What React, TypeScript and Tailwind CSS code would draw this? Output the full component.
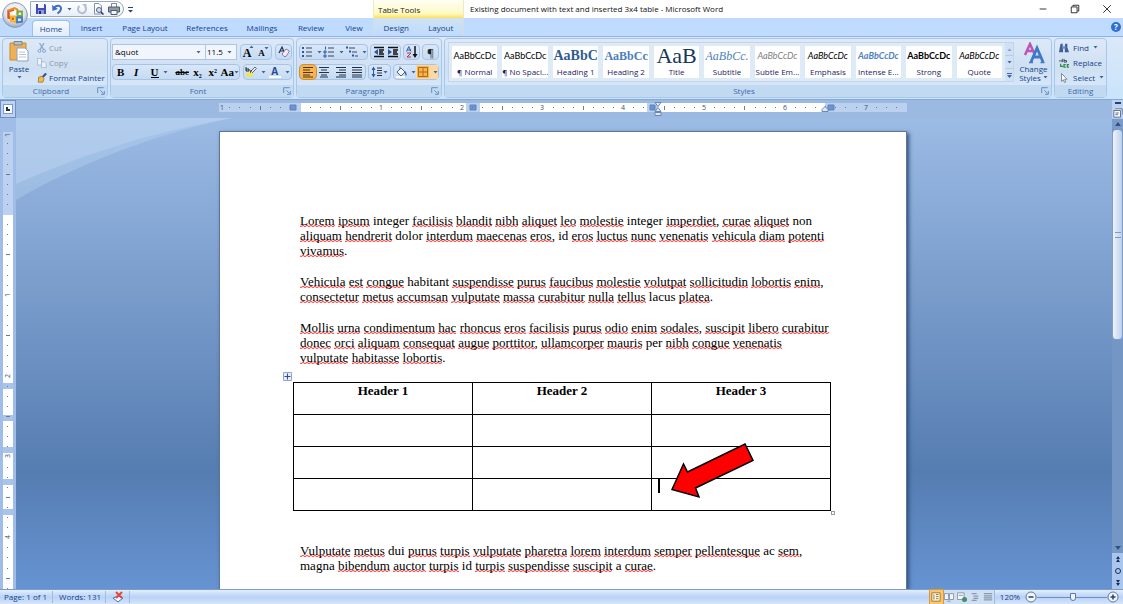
import type { ReactNode } from 'react';
import { clsx } from 'clsx';

const INCH = 80.8;

// words the proofing dictionary accepts, everything else gets a squiggle
const knownWords = ['integer', 'non', 'dolor', 'id', 'habitant', 'lacus', 'per', 'dui', 'ac', 'magna', 'a'];

const intro = [
  [
    'Lorem ipsum integer facilisis blandit nibh aliquet leo molestie integer imperdiet, curae aliquet non',
    'aliquam hendrerit dolor interdum maecenas eros, id eros luctus nunc venenatis vehicula diam potenti',
    'vivamus.',
  ],
  [
    'Vehicula est congue habitant suspendisse purus faucibus molestie volutpat sollicitudin lobortis enim,',
    'consectetur metus accumsan vulputate massa curabitur nulla tellus lacus platea.',
  ],
  [
    'Mollis urna condimentum hac rhoncus eros facilisis purus odio enim sodales, suscipit libero curabitur',
    'donec orci aliquam consequat augue porttitor, ullamcorper mauris per nibh congue venenatis',
    'vulputate habitasse lobortis.',
  ],
];

const outro = [
  'Vulputate metus dui purus turpis vulputate pharetra lorem interdum semper pellentesque ac sem,',
  'magna bibendum auctor turpis id turpis suspendisse suscipit a curae.',
];

const tabs = [
  { name: 'Home', width: 'w-[38px]' },
  { name: 'Insert', width: 'w-[43px]' },
  { name: 'Page Layout', width: 'w-16' },
  { name: 'References', width: 'w-[60px]' },
  { name: 'Mailings', width: 'w-[50px]' },
  { name: 'Review', width: 'w-12' },
  { name: 'View', width: 'w-[38px]' },
];

const styles = [
  { name: '¶ Normal', sample: 'AaBbCcDc', look: 'font-[Lato] text-[9px] text-black' },
  { name: '¶ No Spaci...', sample: 'AaBbCcDc', look: 'font-[Lato] text-[9px] text-black' },
  { name: 'Heading 1', sample: 'AaBbC', look: 'font-["Liberation_Serif",serif] text-sm font-bold text-[#2f5c93]' },
  { name: 'Heading 2', sample: 'AaBbCc', look: 'font-["Liberation_Serif",serif] text-xs font-bold text-[#4a7dbd]' },
  { name: 'Title', sample: 'AaB', look: 'font-["Liberation_Serif",serif] text-[22px] text-[#17365d]' },
  { name: 'Subtitle', sample: 'AaBbCc.', look: 'font-["Liberation_Serif",serif] text-xs italic text-[#4f81bd]' },
  { name: 'Subtle Em...', sample: 'AaBbCcDc', look: 'font-[Lato] text-[9px] italic text-[#808080]' },
  { name: 'Emphasis', sample: 'AaBbCcDc', look: 'font-[Lato] text-[9px] italic text-black' },
  { name: 'Intense E...', sample: 'AaBbCcDc', look: 'font-[Lato] text-[9px] font-bold italic text-[#4f81bd]' },
  { name: 'Strong', sample: 'AaBbCcDc', look: 'font-[Lato] text-[9px] font-bold text-black' },
  { name: 'Quote', sample: 'AaBbCcDc', look: 'font-[Lato] text-[9px] italic text-black' },
];

function Caret({ className }: { className?: string }) {
  return (
    <svg viewBox="0 0 5 3" className={clsx('h-[3px] w-[5px] shrink-0 fill-[#44639a]', className)} aria-hidden="true">
      <path d="M0.5 0h4L2.5 2.6z" />
    </svg>
  );
}

function Icon({ children, className = 'size-3' }: { children: ReactNode; className?: string }) {
  return (
    <svg viewBox="0 0 12 12" className={clsx('shrink-0', className)} fill="none" aria-hidden="true">
      {children}
    </svg>
  );
}

function Tool({ label, className, children }: { label: string; className?: string; children: ReactNode }) {
  return (
    <button type="button" aria-label={label} className={clsx('flex flex-1 items-center justify-center gap-1', className)}>
      {children}
    </button>
  );
}

function ToolGroup({ className, children }: { className: string; children: ReactNode }) {
  return (
    <div className={clsx('flex h-4 rounded-sm border border-[#a6c3e8] bg-linear-to-b from-[#d9e7f8] to-[#c5daf3]', className)}>
      {children}
    </div>
  );
}

function RibbonGroup({ title, className, launcher = true, children }: { title: string; className: string; launcher?: boolean; children: ReactNode }) {
  return (
    <section
      aria-label={title}
      className={clsx('flex flex-col rounded-sm border border-[#a9c7ea] bg-linear-to-b from-[#dde9f7] via-[#cfe0f3] to-[#d9ebfb]', className)}
    >
      <div className="h-[46px]">{children}</div>
      <div className="flex h-3 items-center bg-[#c1d9f1] px-0.5 text-[#3e6aaa]">
        <span className="flex-1 text-center">{title}</span>
        {launcher && (
          <button type="button" aria-label={`${title} options`}>
            <Icon className="size-2">
              <path d="M1 9V1h9M5 5l5 5M11 6v5H6" stroke="#6a8fc5" strokeWidth="1.5" />
            </Icon>
          </button>
        )}
      </div>
    </section>
  );
}

function OfficeButton() {
  return (
    <button type="button" aria-label="Office Button" className="absolute top-0.5 left-0.5 z-10">
      <svg viewBox="0 0 26 26" className="size-[26px]" fill="none" aria-hidden="true">
        <defs>
          <radialGradient id="orb" cx="0.5" cy="0.35" r="0.7">
            <stop offset="0" stopColor="#ffffff" />
            <stop offset="0.6" stopColor="#dfe3ea" />
            <stop offset="1" stopColor="#8797b3" />
          </radialGradient>
        </defs>
        <circle cx="13" cy="13" r="12.4" fill="url(#orb)" stroke="#8d9db8" />
        <path d="M12 7.5L6.5 9v6.5L12 17" stroke="#e0501b" strokeWidth="2.4" />
        <path d="M6 8.6L12.5 6l3 1.5v5" stroke="#f08a24" strokeWidth="2" />
        <path d="M15.5 9.5H20V14h-4.5z" stroke="#6fae3e" strokeWidth="1.8" />
        <path d="M9 14.5h4.5V20L9 19z" stroke="#f3b51f" strokeWidth="2" />
        <path d="M15 15.5h5v4.2l-5 .8z" stroke="#3c7bc4" strokeWidth="1.8" />
      </svg>
    </button>
  );
}

function TitleBar() {
  return (
    <header className="flex h-[18px] bg-white">
      <div className="flex w-[373px] pt-px pl-[30px]">
        <div className="flex h-4 w-[94px] items-center gap-1 rounded-r-full border border-[#9aa9bf] bg-linear-to-b from-white to-[#e9eef5] pl-1">
          <button type="button" aria-label="Save">
            <Icon>
              <path d="M1 1h9l1 1v9H1z" fill="#3f4fb5" />
              <path d="M3 1h6v4H3z" fill="#f4f6fc" />
              <path d="M3 7h6v4H3z" fill="#8f9ade" />
              <path d="M4 8h2v3H4z" fill="#1d2a7d" />
            </Icon>
          </button>
          <button type="button" aria-label="Undo" className="flex items-center gap-1">
            <Icon>
              <path d="M3 5.5C5 1.5 10.5 2 10 6c-.3 2-2 3.5-3.5 4.5" stroke="#3d6fc8" strokeWidth="2" />
              <path d="M1 2l.5 6L7 6z" fill="#3d6fc8" />
            </Icon>
            <Caret />
          </button>
          <button type="button" aria-label="Repeat">
            <Icon>
              <path d="M3.5 3A4 4 0 1 0 9 3.5" stroke="#b3bfd3" strokeWidth="2" />
              <path d="M6 1h4.5v4.5z" fill="#b3bfd3" />
            </Icon>
          </button>
          <button type="button" aria-label="Print Preview">
            <Icon>
              <path d="M2.5.5H7L9.5 3v8h-7z" fill="#fff" stroke="#8290a8" />
              <circle cx="7" cy="7" r="2.5" fill="#cfe3f7" stroke="#4d5d78" />
              <path d="M9 9l2.5 2.5" stroke="#2c3a52" strokeWidth="1.5" />
            </Icon>
          </button>
          <button type="button" aria-label="Quick Print">
            <Icon>
              <path d="M3.5.5h5v4h-5z" fill="#fff" stroke="#7c8798" />
              <path d="M.5 4h11v5H.5z" fill="#8f99a8" stroke="#525d6e" />
              <path d="M3 7.5h6v4H3z" fill="#f2f5f9" stroke="#525d6e" />
              <path d="M9 5h1.5v1.5H9z" fill="#5cc04e" />
            </Icon>
          </button>
        </div>
        <button type="button" aria-label="Customize Quick Access Toolbar" className="flex w-3 items-center justify-center">
          <svg viewBox="0 0 5 6" className="h-1.5 w-[5px]" aria-hidden="true">
            <path d="M0 0h5v1H0zM0 3h5L2.5 5.5z" fill="#28437a" />
          </svg>
        </button>
      </div>
      <div className="w-[91px] border-x border-[#efe9c4] bg-linear-to-b from-[#fffef4] via-[#fff9c4] via-75% to-[#ffe04d] pt-1 pl-1 leading-3 text-[#222]">
        Table Tools
      </div>
      <h1 className="flex flex-1 items-center px-1.5 text-[#111]">
        Existing document with text and inserted 3x4 table - Microsoft Word
      </h1>
      <div className="flex w-24 text-[#111]">
        <Tool label="Minimize">
          <Icon className="size-2.5">
            <path d="M2 6h8" stroke="currentColor" />
          </Icon>
        </Tool>
        <Tool label="Restore Down">
          <Icon className="size-2.5">
            <path d="M1.5 3.5h7v7h-7zM3.5 3V1.5h7v7H9" stroke="currentColor" />
          </Icon>
        </Tool>
        <Tool label="Close">
          <Icon className="size-2.5">
            <path d="M1.5 1.5l9 9M10.5 1.5l-9 9" stroke="currentColor" />
          </Icon>
        </Tool>
      </div>
    </header>
  );
}

function TabRow() {
  return (
    <nav className="flex h-[18px] items-end bg-[#bfdbff] pl-8 text-[#15428b]">
      {tabs.map((tab) => (
        <button
          key={tab.name}
          type="button"
          className={clsx(
            'h-4',
            tab.width,
            tab.name === 'Home' && 'rounded-t-sm border border-b-0 border-[#9dbfe8] bg-linear-to-b from-[#f5faff] to-[#e1edfa]'
          )}
        >
          {tab.name}
        </button>
      ))}
      <div className="flex h-full w-[91px] items-end border-x border-[#d5dfd6] bg-linear-to-b from-[#cfe2f2] to-[#bfdbff]">
        <button type="button" className="h-4 flex-1">Design</button>
        <button type="button" className="h-4 flex-1">Layout</button>
      </div>
      <button type="button" aria-label="Help" className="mr-0.5 mb-1 ml-auto flex size-2.5 items-center justify-center rounded-full bg-[#2f6fd0] font-bold text-white">
        ?
      </button>
    </nav>
  );
}

function ClipboardGroup() {
  return (
    <RibbonGroup title="Clipboard" className="w-[106px]">
      <div className="flex h-full">
        <button type="button" className="flex w-8 flex-col items-center pt-px text-[#15428b]">
          <svg viewBox="0 0 20 22" className="h-[22px] w-5" aria-hidden="true">
            <path d="M1 3h16v17H1z" fill="#eeb155" stroke="#c98a35" />
            <path d="M5 1.5h8V5H5z" fill="#b9bfc9" stroke="#7c8594" />
            <path d="M8 8h8l3 3v10H8z" fill="#fff" stroke="#8d9fbf" />
            <path d="M10 12h6M10 14.5h7M10 17h7" stroke="#b8c7df" />
          </svg>
          <span className="leading-[14px]">Paste</span>
          <Caret />
        </button>
        <div className="flex flex-1 flex-col pt-px whitespace-nowrap text-[#8d95a3]">
          <button type="button" className="flex h-[15px] items-center gap-0.5 pl-0.5">
            <Icon className="size-2.5">
              <path d="M3 0l5 8M8.5 0l-5 8" stroke="#8ba5cc" strokeWidth="1.5" />
              <circle cx="3" cy="9.5" r="1.8" stroke="#7e9ac4" />
              <circle cx="8.5" cy="9.5" r="1.8" stroke="#7e9ac4" />
            </Icon>
            Cut
          </button>
          <button type="button" className="flex h-[15px] items-center gap-0.5 pl-0.5">
            <Icon className="size-2.5">
              <path d="M.5.5h5v8h-5z" fill="#eef3fa" stroke="#a3b4cf" />
              <path d="M5.5 4.5H9l2 2v5H5.5z" fill="#eef3fa" stroke="#a3b4cf" />
            </Icon>
            Copy
          </button>
          <button type="button" className="flex h-[15px] items-center gap-0.5 pl-0.5 text-[#15428b]">
            <Icon className="size-2.5">
              <path d="M11 .5L6.5 5" stroke="#2f549c" strokeWidth="2.5" />
              <path d="M2 5l4-1 2.5 2.5L7 11H1.5z" fill="#f2bd4b" stroke="#a9752a" />
            </Icon>
            Format Painter
          </button>
        </div>
      </div>
    </RibbonGroup>
  );
}

function FontGroup() {
  return (
    <RibbonGroup title="Font" className="w-[184px]">
      <div className="flex h-full flex-col justify-center gap-1 px-px">
        <div className="flex gap-[3px]">
          <div className="flex h-4 w-[125px] items-center border border-[#abc5e8] bg-[#f1f6fd] text-black">
            <div className="flex h-full flex-1 items-center border-r border-[#abc5e8] pr-1">
              <select aria-label="Font" className="flex-1 appearance-none pl-0.5">
                <option>&amp;quot</option>
              </select>
              <Caret />
            </div>
            <div className="flex w-[30px] items-center pr-1">
              <select aria-label="Font Size" className="w-full appearance-none pl-px">
                <option>11.5</option>
              </select>
              <Caret />
            </div>
          </div>
          <ToolGroup className="w-8 font-['Liberation_Serif',serif] font-bold text-black">
            <Tool label="Grow Font" className="text-xs">
              <span className="flex pt-0.5">A<Caret className="-ml-0.5 rotate-180" /></span>
            </Tool>
            <Tool label="Shrink Font" className="text-[9px]">
              <span className="flex pt-0.5">A<Caret className="-ml-px" /></span>
            </Tool>
          </ToolGroup>
          <ToolGroup className="w-[17px]">
            <Tool label="Clear Formatting">
              <Icon>
                <path d="M1 7l3-6 2.5 6M2 5h3.5" stroke="#27354f" strokeWidth="1.2" />
                <path d="M4 8l4-5 3.5 2L8 10.500H6z" fill="#f4ecf5" stroke="#8d7fa3" />
              </Icon>
            </Tool>
          </ToolGroup>
        </div>
        <div className="flex gap-[3px]">
          <ToolGroup className="w-32 font-['Liberation_Serif',serif] text-[11px] font-bold text-black">
            <Tool label="Bold">B</Tool>
            <Tool label="Italic" className="italic">I</Tool>
            <Tool label="Underline" className="flex-2">
              <span className="border-b border-black leading-[10px]">U</span>
              <Caret />
            </Tool>
            <Tool label="Strikethrough" className="text-[9px] line-through">abc</Tool>
            <Tool label="Subscript"><span>x<sub className="text-[6px]">2</sub></span></Tool>
            <Tool label="Superscript"><span>x<sup className="text-[6px]">2</sup></span></Tool>
            <Tool label="Change Case"><span>Aa</span><Caret className="-ml-1" /></Tool>
          </ToolGroup>
          <ToolGroup className="w-[49px]">
            <Tool label="Text Highlight Color">
              <Icon>
                <path d="M5 6l5-5 1.5 1.5-5 5z" fill="#e9edf4" stroke="#59667c" />
                <path d="M1 5V1M1 5h3V3H1M5 5h2" stroke="#222" />
                <path d="M1 7h7v3.5H1z" fill="#f3e73a" />
              </Icon>
              <Caret />
            </Tool>
            <Tool label="Font Color">
              <span className="flex h-3 w-3 justify-center border-b-2 border-white text-[10px] leading-[10px] font-bold text-[#1f4b99]">A</span>
              <Caret />
            </Tool>
          </ToolGroup>
        </div>
      </div>
    </RibbonGroup>
  );
}

function ParagraphGroup() {
  return (
    <RibbonGroup title="Paragraph" className="w-[146px]">
      <div className="flex h-full flex-col justify-center gap-1 px-0.5">
        <div className="flex gap-0.5">
          <ToolGroup className="w-[70px]">
            <Tool label="Bullets">
              <Icon>
                <path d="M1 1h2v2H1zM1 5h2v2H1zM1 9h2v2H1z" fill="#2b57a5" />
                <path d="M5 2h6M5 6h6M5 10h6" stroke="#3a4558" />
              </Icon>
              <Caret />
            </Tool>
            <Tool label="Numbering">
              <Icon>
                <path d="M2.5.5v3M1 5h2v2H1zM1 9h2v2H1z" stroke="#2b57a5" />
                <path d="M5 2h6M5 6h6M5 10h6" stroke="#3a4558" />
              </Icon>
              <Caret />
            </Tool>
            <Tool label="Multilevel List">
              <Icon>
                <path d="M0 1.5h2M3 5.5h2M6 9.5h2" stroke="#2b57a5" strokeWidth="2" />
                <path d="M3 2h6M6 6h5M9 10h3" stroke="#3a4558" />
              </Icon>
              <Caret />
            </Tool>
          </ToolGroup>
          <ToolGroup className="w-[31px]">
            <Tool label="Decrease Indent">
              <Icon>
                <path d="M1 1.5h10M6 4h5M6 6h4M6 8h5M1 10.5h10" stroke="#111" strokeWidth="1.5" />
                <path d="M5 3v6L1 6z" fill="#2b57a5" />
              </Icon>
            </Tool>
            <Tool label="Increase Indent">
              <Icon>
                <path d="M1 1.5h10M6 4h5M6 6h4M6 8h5M1 10.5h10" stroke="#111" strokeWidth="1.5" />
                <path d="M1 3v6l4-3z" fill="#2b57a5" />
              </Icon>
            </Tool>
          </ToolGroup>
          <ToolGroup className="w-[17px]">
            <Tool label="Sort">
              <Icon>
                <path d="M.5 5.5L2.8.5 5 5.5M1.5 4h3" stroke="#2b57a5" />
                <path d="M1 7h4l-4 4h4" stroke="#b1383c" />
                <path d="M9 0v9" stroke="#111" strokeWidth="1.5" />
                <path d="M6.5 8h5L9 12z" fill="#111" />
              </Icon>
            </Tool>
          </ToolGroup>
          <ToolGroup className="w-[17px]">
            <Tool label="Show/Hide ¶" className="text-[11px] leading-none text-[#222]">¶</Tool>
          </ToolGroup>
        </div>
        <div className="flex gap-0.5">
          <ToolGroup className="w-[67px]">
            <Tool label="Align Text Left" className="rounded-sm bg-[#f9b44f] ring-1 ring-[#c99037]">
              <Icon>
                <path d="M1 1.5h10M1 4h7M1 6.5h10M1 9h7M1 11h10" stroke="#4b3410" />
              </Icon>
            </Tool>
            <Tool label="Center">
              <Icon>
                <path d="M1 1.5h10M3 4h6M1 6.5h10M3 9h6M2 11h8" stroke="#222f45" />
              </Icon>
            </Tool>
            <Tool label="Align Text Right">
              <Icon>
                <path d="M1 1.5h10M4 4h7M1 6.5h10M4 9h7M1 11h10" stroke="#222f45" />
              </Icon>
            </Tool>
            <Tool label="Justify">
              <Icon>
                <path d="M1 1.5h10M1 4h10M1 6.5h10M1 9h10M1 11h10" stroke="#222f45" />
              </Icon>
            </Tool>
          </ToolGroup>
          <ToolGroup className="w-[23px]">
            <Tool label="Line Spacing">
              <Icon>
                <path d="M2.5 2v8" stroke="#2b57a5" />
                <path d="M.5 4l2-3.5 2 3.5zM.5 8l2 3.5 2-3.5z" fill="#2b57a5" />
                <path d="M6 2h5M6 4.5h5M6 7h5M6 9.5h5" stroke="#222f45" />
              </Icon>
              <Caret className="-ml-1" />
            </Tool>
          </ToolGroup>
          <ToolGroup className="w-[46px]">
            <Tool label="Shading">
              <Icon>
                <path d="M2 6l4-4 4 4-4 4z" fill="#f4f7fc" stroke="#4d5e7c" />
                <path d="M5 3V.5" stroke="#4d5e7c" />
                <path d="M10 5c2 2 2 4 1 5-1-1-1.5-3-1-5z" fill="#2b67c5" />
                <path d="M1 11h9" stroke="#fff" strokeWidth="2" />
              </Icon>
              <Caret />
            </Tool>
            <Tool label="Borders" className="bg-[#fbd9a0]">
              <Icon>
                <path d="M0 0h12v12H0z" fill="#f9b44f" />
                <path d="M1.5 1.5h9v9h-9zM6 1.5v9M1.5 6h9" stroke="#b06c14" />
              </Icon>
              <Caret />
            </Tool>
          </ToolGroup>
        </div>
      </div>
    </RibbonGroup>
  );
}

function StylesGroup() {
  return (
    <RibbonGroup title="Styles" className="flex-1">
      <div className="flex h-full items-center gap-0.5 pl-[3px]">
        <div className="flex h-10 flex-1 border border-[#c2d5ec] bg-[#dfeaf7]">
          <div className="grid flex-1 grid-cols-11 gap-[5px] p-[3px]">
            {styles.map((style) => (
              <button key={style.name} type="button" className="flex flex-col items-center justify-end bg-white">
                <span className={clsx('flex h-5 items-center leading-5 whitespace-nowrap', style.look)}>{style.sample}</span>
                <span className="leading-3 whitespace-nowrap text-[#241a63]">{style.name}</span>
              </button>
            ))}
          </div>
          <div className="flex w-2 flex-col divide-y divide-[#b5cbe8] bg-[#d0e1f5]">
            <Tool label="Row up"><Caret className="rotate-180 opacity-50" /></Tool>
            <Tool label="Row down"><Caret /></Tool>
            <Tool label="More styles">
              <svg viewBox="0 0 5 5" className="size-[5px] fill-[#44639a]" aria-hidden="true"><path d="M0 0h5v1H0zM0 2h5L2.5 5z" /></svg>
            </Tool>
          </div>
        </div>
        <button type="button" className="flex w-[35px] flex-col items-center leading-[9px] text-[#15428b]">
          <svg viewBox="0 0 22 22" className="size-[22px]" fill="none" aria-hidden="true">
            <path d="M2 13L7 2l5 11M4 9h6" stroke="#b957b3" strokeWidth="2.5" />
            <path d="M8 20l6-14 6 14M10 15h8" stroke="#3f78c6" strokeWidth="2.8" />
            <path d="M6 20.5h4M17.5 20.5h4" stroke="#3f78c6" strokeWidth="1.5" />
          </svg>
          <span>Change</span>
          <span className="flex items-center gap-0.5">
            Styles <Caret />
          </span>
        </button>
      </div>
    </RibbonGroup>
  );
}

function EditingGroup() {
  return (
    <RibbonGroup title="Editing" className="w-[53px]" launcher={false}>
      <div className="flex flex-col pt-px text-[#15428b]">
        <button type="button" className="flex h-[15px] items-center gap-1 pl-1">
          <Icon className="size-2.5">
            <path d="M2 1h2.5v3L5 11H0l1-6zM7.5 1H10v4l2 6H7V4z" fill="#3d5f9d" />
            <path d="M4 4h4v3H4z" fill="#6f8fc6" />
          </Icon>
          Find <Caret />
        </button>
        <button type="button" className="flex h-[15px] items-center gap-1 pl-1">
          <Icon className="size-2.5">
            <path d="M0 3.5h4M4 1v4M6 1v4h3V3H6" stroke="#303a4f" />
            <path d="M2 7v3h3M8 8H6v3h2M12 8h-2v3h2" stroke="#2e8a4b" strokeWidth="1.5" />
          </Icon>
          Replace
        </button>
        <button type="button" className="flex h-[15px] items-center gap-1 pl-1">
          <Icon className="size-2.5">
            <path d="M3 .5V10l2.2-2 1.3 3.5 1.5-.7-1.3-3.3h3z" fill="#fff" stroke="#6c7890" />
          </Icon>
          Select <Caret />
        </button>
      </div>
    </RibbonGroup>
  );
}

// dots every eighth of an inch, a dash at the half and a figure at the inch
function HorizontalRuler() {
  const eighths = Array.from({ length: 68 }, (_, i) => i - 8);
  return (
    <svg viewBox="0 0 688 14" className="h-3.5 w-[688px] shrink-0" aria-label="Horizontal ruler">
      <path d="M0 1h688v9H0z" fill="#bcd1ef" />
      <path d="M82 1h165v9H82zM261 1h167v9H261zM439 1h167v9H439z" fill="#fff" />
      <path d="M71 3h6v5h-6zM251 3h6v5h-6zM431 3h5v5h-5zM609 3h6v5h-6z" fill="#6f94cb" stroke="#5c83bd" />
      {eighths.map((n) => {
        const x = 81 + Math.round((n * INCH) / 8);
        if (n === 0) return null;
        if (n % 8 === 0) {
          return (
            <text key={n} x={Math.max(x, 3)} y="8" textAnchor="middle" className="fill-[#3c4f70] text-[7px]">
              {Math.abs(n / 8)}
            </text>
          );
        }
        return <rect key={n} x={x} y={n % 4 === 0 ? 4 : 5} width="1" height={n % 4 === 0 ? 4 : 1} fill="#6c7b94" />;
      })}
      <path d="M436 .5h6l-3 4zM436 9.5h6l-3-4zM436 10.5h6v3h-6z" fill="#dfe8f5" stroke="#6c87b4" />
      <path d="M603 9.5h6v-2l-3-3-3 3z" fill="#dfe8f5" stroke="#6c87b4" />
    </svg>
  );
}

function VerticalRuler() {
  const eighths = Array.from({ length: 46 }, (_, i) => i - 8);
  return (
    <svg viewBox="0 0 10 460" className="mt-3.5 h-[460px] w-2.5 shrink-0" aria-label="Vertical ruler">
      <path d="M0 0h10v83H0z" fill="#bcd1ef" />
      <path d="M0 83h10v377H0z" fill="#fff" />
      <path d="M0 251h10v6H0zM0 283h10v6H0zM0 315h10v6H0zM0 347h10v6H0zM0 377h10v6H0z" fill="#a9c4ea" />
      {eighths.map((n) => {
        const y = 82 + Math.round((n * INCH) / 8);
        if (n === 0) return null;
        if (n % 8 === 0) {
          return (
            <text key={n} textAnchor="middle" transform={`translate(7 ${Math.max(y, 3)}) rotate(-90)`} className="fill-[#3c4f70] text-[7px]">
              {Math.abs(n / 8)}
            </text>
          );
        }
        return <rect key={n} x={n % 4 === 0 ? 3 : 4} y={y} width={n % 4 === 0 ? 4 : 1} height="1" fill="#6c7b94" />;
      })}
    </svg>
  );
}

function Squiggle({ children }: { children: ReactNode }) {
  return (
    <span className="bg-[linear-gradient(90deg,#ff5a5a_50%,#ffd0d0_50%),linear-gradient(90deg,#ffd0d0_50%,#ff5a5a_50%)] bg-[length:4px_1px,4px_1px] bg-[position:0_calc(100%-1px),0_calc(100%-2px)] bg-repeat-x">
      {children}
    </span>
  );
}

function Line({ text }: { text: string }) {
  const words = text.split(' ');
  return (
    <span className="block whitespace-nowrap">
      {words.map((word, i) => {
        const bare = word.replace(/[.,]/, '');
        return (
          <span key={i}>
            {knownWords.includes(bare) ? bare : <Squiggle>{bare}</Squiggle>}
            {word.slice(bare.length)}
            {i < words.length - 1 && ' '}
          </span>
        );
      })}
    </span>
  );
}

function DocumentTable() {
  return (
    <div className="relative -mx-[7px] mt-[17px] w-[538px]">
      <table className="w-full table-fixed border-collapse">
        <thead>
          <tr className="h-8">
            {['Header 1', 'Header 2', 'Header 3'].map((header) => (
              <th key={header} className="border border-black align-top leading-[15px] font-bold">{header}</th>
            ))}
          </tr>
        </thead>
        <tbody>
          {[1, 2, 3].map((row) => (
            <tr key={row} className="h-8">
              <td className="border border-black" />
              <td className="border border-black" />
              <td className="border border-black px-1.5 align-top">
                {row === 3 && <span className="block h-3.5 w-0.5 bg-black" />}
              </td>
            </tr>
          ))}
        </tbody>
      </table>
      <svg viewBox="0 0 9 9" className="absolute -top-2.5 -left-2.5 size-[9px]" fill="none" aria-hidden="true">
        <path d="M.5.5h8v8h-8z" fill="#e6eefb" stroke="#8ea7cf" />
        <path d="M4.5 1.5v6M1.5 4.5h6" stroke="#2f4f94" />
      </svg>
      <span className="absolute -right-1 -bottom-1 size-1 border border-[#999] bg-white" />
      <svg viewBox="0 0 86 58" className="absolute right-[76px] bottom-3 h-[58px] w-[86px]" aria-hidden="true">
        <path d="M3 48.5L14.5 23l4 8L76 3l8 16.5L26.5 47l3.5 9z" fill="#f00" stroke="#000" strokeWidth="1.5" />
      </svg>
    </div>
  );
}

function ScrollBar() {
  return (
    <div className="flex w-[11px] flex-col items-center bg-[#a9c6ee] pt-px">
      <button type="button" aria-label="Scroll up" className="flex h-2.5 w-full items-center justify-center bg-[#7b9cca]">
        <svg viewBox="0 0 6 4" className="h-1 w-1.5 fill-[#35507f]" aria-hidden="true"><path d="M0 4h6L3 0z" /></svg>
      </button>
      <div className="flex w-full flex-1 flex-col bg-[#7496c4]">
        <div className="flex h-[51%] w-full items-center justify-center rounded-sm border border-[#7d9cc9] bg-linear-to-r from-[#eef4fc] to-[#bdd0ea]">
          <span className="h-1.5 w-1.5 border-y border-[#8199bf]" />
        </div>
      </div>
      <button type="button" aria-label="Scroll down" className="flex h-2.5 w-full items-center justify-center bg-[#7496c4]">
        <svg viewBox="0 0 6 4" className="h-1 w-1.5 fill-[#35507f]" aria-hidden="true"><path d="M0 0h6L3 4z" /></svg>
      </button>
      <button type="button" aria-label="Previous page" className="flex h-3 items-center">
        <svg viewBox="0 0 6 6" className="size-1.5 fill-[#1b2f57]" aria-hidden="true"><path d="M1 3h4L3 0zM1 6h4L3 3z" /></svg>
      </button>
      <button type="button" aria-label="Select browse object" className="flex h-3 items-center">
        <span className="size-1.5 rounded-full border border-[#1b2f57]" />
      </button>
      <button type="button" aria-label="Next page" className="flex h-3 items-center">
        <svg viewBox="0 0 6 6" className="size-1.5 fill-[#1b2f57]" aria-hidden="true"><path d="M1 0h4L3 3zM1 3h4L3 6z" /></svg>
      </button>
    </div>
  );
}

function StatusBar() {
  return (
    <footer className="flex h-[15px] items-center border-t border-[#7f9bc5] bg-linear-to-b from-[#e3eefc] via-[#b9d2f6] to-[#d5e5fb] text-[#15428b]">
      <span className="flex w-[53px] items-center border-r border-[#9fbbe2] pl-1 leading-3">Page: 1 of 1</span>
      <span className="flex w-[53px] items-center border-r border-[#9fbbe2] pl-1.5 leading-3">Words: 131</span>
      <button type="button" aria-label="Proofing errors" className="flex w-6 justify-center border-r border-[#9fbbe2]">
        <Icon>
          <path d="M1 7l5-2 5 2-5 4z" fill="#f6f9fe" stroke="#4e73b3" />
          <path d="M4 1l6 6M10 1L4 7" stroke="#e2483b" strokeWidth="2" />
        </Icon>
      </button>
      <div className="ml-auto flex h-full w-[66px] items-center border-x border-[#9fbbe2] bg-[#cfdff4]">
        <Tool label="Print Layout" className="h-full bg-[#fbc66c] ring-1 ring-[#d39b3c]">
          <Icon className="size-2.5"><path d="M1 1h10v10H1zM3.5 3v6M6 3h3M6 5.5h3M6 8h3" fill="#fff3d9" stroke="#8a6a34" /></Icon>
        </Tool>
        <Tool label="Full Screen Reading">
          <Icon className="size-2.5"><path d="M.5 2h5v7h-5zM6.5 2h5v7h-5zM4 11h4" fill="#f3f6fb" stroke="#7d899c" /></Icon>
        </Tool>
        <Tool label="Web Layout">
          <Icon className="size-2.5">
            <path d="M.5 1h8v8h-8zM2 4h5" fill="#f3f6fb" stroke="#7d899c" />
            <circle cx="9" cy="9" r="3" fill="#3f8f68" />
          </Icon>
        </Tool>
        <Tool label="Outline">
          <Icon className="size-2.5"><path d="M2 2h6M4 5h6M4 7.5h6M2 10h6" stroke="#8c98ab" strokeWidth="1.5" /></Icon>
        </Tool>
        <Tool label="Draft">
          <Icon className="size-2.5"><path d="M1 2h10M1 4.5h10M1 7h10M1 9.5h10" stroke="#8c98ab" strokeWidth="1.5" /></Icon>
        </Tool>
      </div>
      <button type="button" className="w-[30px] leading-3">120%</button>
      <button type="button" aria-label="Zoom out">
        <Icon>
          <circle cx="6" cy="6" r="5" fill="#f2f6fc" stroke="#5e78a5" />
          <path d="M3.5 6h5" stroke="#26406f" strokeWidth="1.5" />
        </Icon>
      </button>
      <input
        type="range"
        aria-label="Zoom"
        min={0}
        max={100}
        defaultValue={51}
        className="h-3 w-[70px] appearance-none bg-transparent [&::-webkit-slider-runnable-track]:h-px [&::-webkit-slider-runnable-track]:bg-[#6f8fc0] [&::-webkit-slider-thumb]:-mt-1 [&::-webkit-slider-thumb]:h-2 [&::-webkit-slider-thumb]:w-1.5 [&::-webkit-slider-thumb]:appearance-none [&::-webkit-slider-thumb]:rounded-b-full [&::-webkit-slider-thumb]:border [&::-webkit-slider-thumb]:border-[#5e78a5] [&::-webkit-slider-thumb]:bg-[#eef4fc]"
      />
      <button type="button" aria-label="Zoom in" className="mr-1">
        <Icon>
          <circle cx="6" cy="6" r="5" fill="#f2f6fc" stroke="#5e78a5" />
          <path d="M3.5 6h5M6 3.5v5" stroke="#26406f" strokeWidth="1.5" />
        </Icon>
      </button>
    </footer>
  );
}

export default function App() {
  return (
    <div className="relative flex h-screen flex-col overflow-hidden bg-[#bfdbff] font-['Open_Sans','Noto_Sans',sans-serif] text-[8px] leading-3">
      <OfficeButton />
      <TitleBar />
      <TabRow />
      <div className="flex gap-0.5 border-t border-[#8db2e3] bg-linear-to-b from-[#dbe8f8] to-[#c9e4fb] py-px pr-4 pl-0.5">
        <ClipboardGroup />
        <FontGroup />
        <ParagraphGroup />
        <StylesGroup />
        <EditingGroup />
      </div>

      <div className="flex h-[19px] shrink-0 items-center border-t border-[#88a8d4] bg-[#9bb9e1]">
        <button type="button" aria-label="Tab selector" className="flex h-full w-4 items-center justify-center border border-[#6f90c6] bg-[#bfd3f0]">
          <span className="flex size-2.5 items-center justify-center border border-[#7c9bcd] bg-white">
            <span className="size-1 border-b-2 border-l-2 border-[#1e2f55]" />
          </span>
        </button>
        <div className="flex flex-1 justify-center pr-0.5">
          <HorizontalRuler />
        </div>
        <button type="button" aria-label="View Ruler" className="flex h-full w-[11px] flex-col items-center justify-between bg-[#bcd2f1] pt-0.5">
          <span className="h-0.5 w-1.5 bg-[#27416f]" />
          <Icon className="size-2.5">
            <path d="M1 3h8v8H1zM3 1h8v7" fill="#f6f8fc" stroke="#4c5f82" />
            <path d="M3 6h4M3 8h3" stroke="#4c5f82" />
          </Icon>
        </button>
      </div>

      <main className="flex min-h-0 flex-1 bg-linear-to-b from-[#9cbbe5] via-[#567db1] via-75% to-[#6693d2]">
        <div className="flex w-4 items-start justify-center overflow-hidden bg-[#9fbde6]">
          <VerticalRuler />
        </div>
        <div className="relative flex flex-1 justify-center overflow-hidden pr-0.5">
          <svg viewBox="0 0 216 82" className="absolute top-0 left-0 h-[82px] w-[216px]" aria-hidden="true">
            <path d="M0 0h216C130 18 55 50 0 82z" fill="#c5ddf5" opacity="0.3" />
            <path d="M0 0h216C120 17 55 42 0 66z" fill="#c5ddf5" opacity="0.35" />
          </svg>
          <article className="relative mt-[13px] w-[688px] shrink-0 border border-b-0 border-[#5f7699] bg-white px-20 pt-[81px] font-['Liberation_Serif','Times_New_Roman',serif] text-[13px] leading-[15px] text-black shadow-[2px_2px_4px_#30507f]">
            {intro.map((lines) => (
              <p key={lines[0]} className="mb-4">
                {lines.map((line) => (
                  <Line key={line} text={line} />
                ))}
              </p>
            ))}
            <DocumentTable />
            <p className="mt-8">
              {outro.map((line) => (
                <Line key={line} text={line} />
              ))}
            </p>
          </article>
        </div>
        <ScrollBar />
      </main>
      <StatusBar />
    </div>
  );
}
